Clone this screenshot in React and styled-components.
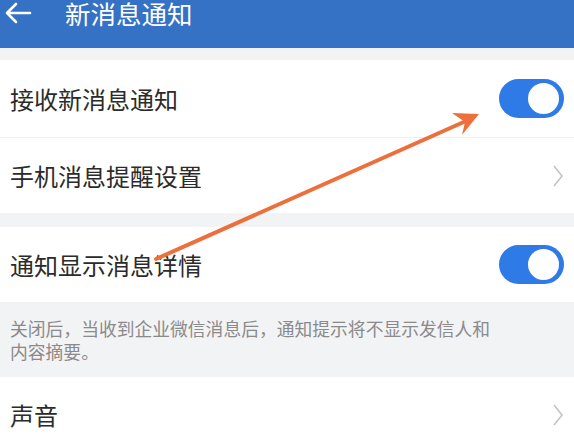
import React from 'react'
import styled, { createGlobalStyle } from 'styled-components'

const GlobalStyle = createGlobalStyle`
  html, body {
    margin: 0;
    padding: 0;
    background: #f2f3f5;
    font-family: "Noto Sans CJK SC", "Noto Sans", sans-serif;
  }
  body {
    width: 574px;
    height: 440px;
    overflow: hidden;
  }
`

const Page = styled.div`
  position: relative;
  width: 574px;
  height: 440px;
  overflow: hidden;
  background: #f2f3f5;
`

const Header = styled.header`
  height: 48px;
  background: #3571c5;
  display: flex;
  align-items: flex-start;
  color: #fff;
`

const Back = styled.div`
  width: 30px;
  height: 26px;
  margin: 0 0 0 4px;
  display: flex;
  align-items: center;
`

const Title = styled.h1`
  margin: 0 0 0 31px;
  font-size: 25.5px;
  font-weight: 400;
  line-height: 26px;
`

const Group = styled.section`
  background: #fff;
  margin-top: ${(p) => p.top}px;
`

const Row = styled.div`
  height: ${(p) => p.h || 76}px;
  display: flex;
  align-items: center;
  justify-content: space-between;
  padding: 0 10px 0 10px;
  position: relative;
  box-sizing: border-box;
  & + & {
    border-top: 1px solid #eeeff1;
  }
`

const Label = styled.span`
  font-size: 24px;
  color: #2b2b2b;
  line-height: 1;
`

const Track = styled.div`
  width: 65px;
  height: 39px;
  border-radius: 20px;
  background: #2e7ae6;
  display: flex;
  align-items: center;
  justify-content: flex-end;
  padding-right: 5px;
  box-sizing: border-box;
`

const Knob = styled.div`
  width: 31px;
  height: 31px;
  border-radius: 50%;
  background: #fff;
`

const Chevron = styled.svg`
  width: 12px;
  height: 22px;
`

const Note = styled.p`
  margin: 0;
  height: 75px;
  padding: 15px 76px 0 10px;
  box-sizing: border-box;
  font-size: 17.8px;
  line-height: 22.5px;
  color: #8a8a8a;
`

const Overlay = styled.svg`
  position: absolute;
  left: 0;
  top: 0;
  pointer-events: none;
`

const Toggle = () => (
  <Track>
    <Knob />
  </Track>
)

const Arrow = () => (
  <Chevron viewBox="0 0 12 22">
    <path d="M2 1 L10 11 L2 21" fill="none" stroke="#c4c4c4" strokeWidth="1.6" />
  </Chevron>
)

export default function App() {
  return (
    <Page>
      <GlobalStyle />
      <Header>
        <Back>
          <svg width="28" height="22" viewBox="0 0 28 22">
            <path d="M26 11 H3 M12 2 L3 11 L12 20" fill="none" stroke="#fff" strokeWidth="2.6" strokeLinecap="round" strokeLinejoin="round" />
          </svg>
        </Back>
        <Title>新消息通知</Title>
      </Header>
      <Group top={12}>
        <Row h={77}>
          <Label>接收新消息通知</Label>
          <Toggle />
        </Row>
        <Row>
          <Label>手机消息提醒设置</Label>
          <Arrow />
        </Row>
      </Group>
      <Group top={14}>
        <Row h={75}>
          <Label>通知显示消息详情</Label>
          <Toggle />
        </Row>
      </Group>
      <Note>关闭后，当收到企业微信消息后，通知提示将不显示发信人和内容摘要。</Note>
      <Group top={0}>
        <Row h={76}>
          <Label>声音</Label>
          <Arrow />
        </Row>
      </Group>
      <Overlay width="574" height="440" viewBox="0 0 574 440">
        <path d="M156 259 L466 121" stroke="#ec6f3c" strokeWidth="4" strokeLinecap="round" />
        <path d="M479 114 L452 113 L465 122 L462 135 Z" fill="#ec6f3c" />
      </Overlay>
    </Page>
  )
}
